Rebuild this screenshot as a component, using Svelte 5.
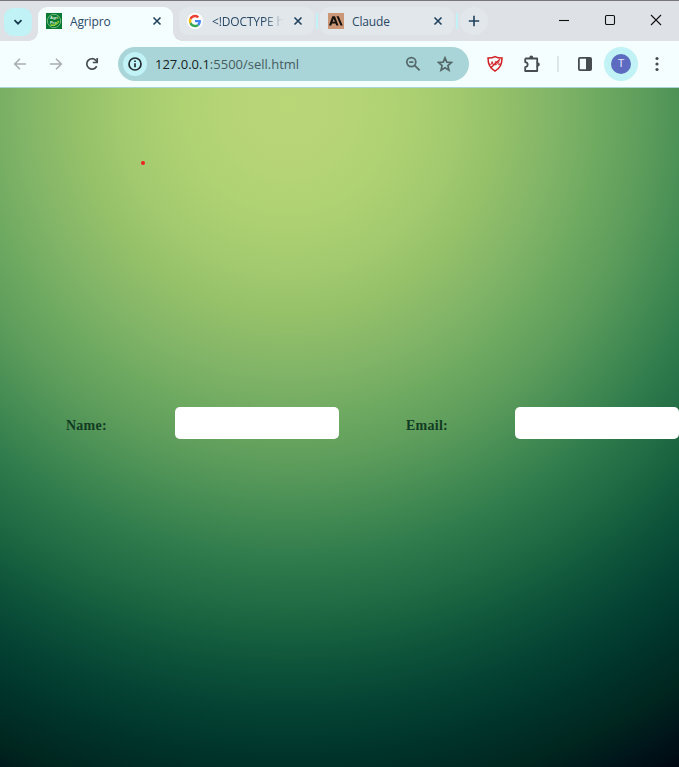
<script>
  const fields = ['Name:', 'Email:'];
</script>

{#snippet close()}
  <svg class="close" width="16" height="16" viewBox="0 0 16 16"><path d="M4.5 4.5l7 7M11.5 4.5l-7 7" /></svg>
{/snippet}

<div class="window">
  <div class="tabs">
    <div class="search"><svg width="12" height="12" viewBox="0 0 12 12"><path d="M2.5 4.2L6 7.7l3.5-3.5" /></svg></div>
    <div class="tab active">
      <svg class="fav" width="16" height="16" viewBox="0 0 16 16">
        <rect width="16" height="16" fill="#087b32" />
        <circle cx="8" cy="8" r="6.7" fill="none" stroke="#79b783" />
        <text x="8" y="5.9" text-anchor="middle" class="mini">Agri</text>
        <text x="7.3" y="10.6" text-anchor="middle" class="mini">Pro</text>
        <path d="M4 12q3-.2 5 0 1-3 4-4-.5 3-4 4M5 12.5h4" stroke="#9bd33a" stroke-width="1" fill="none" />
      </svg>
      <span class="title">Agripro</span>
      {@render close()}
    </div>
    <div class="tab second">
      <svg class="fav" width="16" height="16" viewBox="0 0 16 16">
        <circle cx="8" cy="8" r="8" fill="#fff" />
        <g transform="translate(1.8 1.8) scale(.258)">
          <path fill="#ea4335" d="M24 9.5c3.54 0 6.71 1.22 9.21 3.6l6.85-6.85C35.9 2.38 30.47 0 24 0 14.62 0 6.51 5.38 2.56 13.22l7.98 6.19C12.43 13.72 17.74 9.5 24 9.5z" />
          <path fill="#4285f4" d="M46.98 24.55c0-1.57-.15-3.09-.38-4.55H24v9.02h12.94c-.58 2.96-2.26 5.48-4.78 7.18l7.73 6c4.51-4.18 7.09-10.36 7.09-17.65z" />
          <path fill="#fbbc05" d="M10.53 28.59A14.5 14.5 0 0 1 9.77 24c0-1.6.27-3.14.76-4.59l-7.98-6.19A24 24 0 0 0 0 24c0 3.88.92 7.54 2.56 10.78l7.97-6.19z" />
          <path fill="#34a853" d="M24 48c6.48 0 11.93-2.13 15.89-5.81l-7.73-6c-2.15 1.45-4.92 2.3-8.16 2.3-6.26 0-11.57-4.22-13.47-9.91l-7.98 6.19C6.51 42.62 14.62 48 24 48z" />
        </g>
      </svg>
      <span class="title doc">&lt;!DOCTYPE h</span>
      {@render close()}
    </div>
    <i class="sep"></i>
    <div class="tab third">
      <svg class="fav" width="16" height="16" viewBox="0 0 16 16">
        <rect width="16" height="16" fill="#cc9777" />
        <path fill="#17130f" fill-rule="evenodd" d="M4.3 3.2H7l3.5 9.4H8.3l-.8-2.1H4l-.8 2.1H1zM4.7 8.7h2.1L5.7 5.8zM8.5 3.2h2.2l4 9.4h-2.2z" />
      </svg>
      <span class="title">Claude</span>
      {@render close()}
    </div>
    <i class="sep"></i>
    <div class="plus"><svg width="12" height="12" viewBox="0 0 12 12"><path d="M6 .8v10.4M.8 6h10.4" /></svg></div>
    <div class="controls">
      <svg width="12" height="12" viewBox="0 0 12 12"><path d="M1 6.5h10" /></svg>
      <svg width="12" height="12" viewBox="0 0 12 12"><rect x="1.5" y="1.5" width="9" height="9" rx="1.2" /></svg>
      <svg width="12" height="12" viewBox="0 0 12 12"><path d="M1 1l10 10M11 1L1 11" /></svg>
    </div>
  </div>

  <div class="toolbar">
    <svg class="nav" width="16" height="16" viewBox="0 0 16 16"><path d="M14 8H2.8M8 2.7L2.7 8 8 13.3" /></svg>
    <svg class="nav" width="16" height="16" viewBox="0 0 16 16"><path d="M2 8h11.2M8 2.7L13.3 8 8 13.3" /></svg>
    <svg class="reload" width="16" height="16" viewBox="0 0 16 16"><path d="M12.7 10.1A5.2 5.2 0 1 1 11.8 4.4L13.2 5.8" /><path d="M13.2 2v4.5H8.8" /></svg>
    <div class="address">
      <div class="info"><svg width="16" height="16" viewBox="0 0 16 16"><circle cx="8" cy="8" r="6" /><path d="M8 7.2v4M8 4.5v1.6" /></svg></div>
      <span class="url"><b>127.0.0.1</b>:5500/sell.html</span>
      <svg class="zoom" width="16" height="16" viewBox="0 0 16 16"><circle cx="6.3" cy="6.1" r="4.5" /><path d="M4.2 6.1h4.2" /><path d="M9.6 9.4l5 5" stroke-width="1.9" /></svg>
      <svg class="star" width="16" height="16" viewBox="0 0 16 16"><path d="M8 1.8l1.8 4.3 4.7.4-3.6 3.1 1.1 4.6L8 11.7l-4 2.5 1.1-4.6-3.6-3.1 4.7-.4z" /></svg>
    </div>
    <svg class="shield" width="18" height="18" viewBox="0 0 18 18"><path d="M9 1.600c2.200 1.300 4.400 1.500 7 1.500 0 5.600-1 10-7 13C3 13.100 2 8.700 2 3.100c2.600 0 4.800-.2 7-1.500z" /><path d="M4.500 13L14 4.200" stroke-width="1.400" /><path d="M4.500 10l1.700-3.500L7.500 10M5.300 8.800H7M9.200 10V6.700q2.300-.2 2 1.500-.2 1.800-2 1.800M13.600 6.700q-1.500-.3-1.500 1.500t1.500 1.600V8.400" stroke-width=".9" /></svg>
    <svg class="puzzle" width="18" height="18" viewBox="0 0 18 18"><path d="M2.200 3.500h12v4.300M14.200 11.200V16h-12v-3.900c3.300-.3 3.300-4.700 0-5V3.500" stroke-linejoin="round" /><path d="M14.200 7v5" /><path d="M6.400 3V2.500a1.900 1.900 0 0 1 3.800 0V3zM14.500 7.600h.4a1.900 1.900 0 0 1 0 3.800h-.4z" class="solid" /></svg>
    <i class="rule"></i>
    <svg class="panel" width="16" height="16" viewBox="0 0 16 16"><rect x="1.900" y="1.900" width="12.200" height="12.200" rx="1" /><path d="M9 2h5v12H9z" class="solid" /></svg>
    <div class="profile"><span>T</span></div>
    <svg class="more" width="4" height="16" viewBox="0 0 4 16"><circle cx="2" cy="2.500" r="1.600" /><circle cx="2" cy="8" r="1.600" /><circle cx="2" cy="13.500" r="1.600" /></svg>
  </div>

  <main>
    <span class="dot"></span>
    <form>
      {#each fields as field}
        <label><span>{field}</span><input type="text" aria-label={field} /></label>
      {/each}
    </form>
  </main>
</div>

<style>
  :global(body) { margin: 0; overflow: hidden; }
  * { box-sizing: border-box; }
  svg { display: block; flex: none; fill: none; }
  i { flex: none; }
  .window { width: 679px; height: 767px; display: flex; flex-direction: column; overflow: hidden; font-family: "Open Sans", "Noto Sans", sans-serif; }
  .tabs { height: 41px; display: flex; align-items: flex-start; flex: none; padding: 6px 0 0 4px; border-top: 1px solid #77767b; background: #dee1e6; }
  .search { width: 28px; height: 28px; margin: 1px 6px 0 0; display: grid; place-items: center; border-radius: 9px; background: #c1f2f5; flex: none; }
  .search path { stroke: #173c50; stroke-width: 1.8; }
  .tab { position: relative; display: flex; align-items: center; width: 135px; height: 28px; flex: none; padding: 0 8px; border-radius: 9px; background: #e2e7eb; color: #294966; }
  .active { height: 34px; padding-bottom: 6px; border-radius: 9px 9px 0 0; background: #f5feff; }
  .active::before, .active::after { content: ''; position: absolute; bottom: 0; width: 9px; height: 9px; }
  .active::before { left: -9px; background: radial-gradient(circle at 0 0, transparent 8.5px, #f5feff 9px); }
  .active::after { right: -9px; background: radial-gradient(circle at 100% 0, transparent 8.5px, #f5feff 9px); }
  .second { margin-left: 6px; }
  .third { width: 134px; margin-left: 2px; }
  .title { margin-left: 8px; flex: 1; overflow: hidden; white-space: nowrap; font-size: 12px; line-height: 18px; letter-spacing: -.15px; padding-top: 1px; }
  .doc { margin-left: 9px; mask-image: linear-gradient(90deg, #000 53px, transparent 71px); }
  .mini { font: bold 4px "Liberation Sans", sans-serif; fill: #e4f1df; }
  .close path { stroke: #20415d; stroke-width: 1.6; }
  .sep { width: 2px; height: 16px; margin: 6px 0 0 2px; background: #c1f2f5; }
  .plus { width: 28px; height: 28px; margin-left: 2px; border-radius: 50%; background: #e2e7eb; display: grid; place-items: center; flex: none; }
  .plus path { stroke: #20415d; stroke-width: 1.6; }
  .controls { margin: 7px 17px 0 auto; display: flex; gap: 34px; }
  .controls svg { stroke: #111; stroke-width: 1.1; }
  .toolbar { height: 47px; flex: none; display: flex; align-items: center; padding-left: 12px; border-bottom: 1px solid #a9d5d8; background: #f5feff; }
  .nav { margin-right: 20px; stroke: #a9aeb1; stroke-width: 1.6; }
  .reload { stroke: #474c50; stroke-width: 1.7; margin-right: 18px; }
  .address { width: 351px; height: 34px; display: flex; align-items: center; padding: 0 16px 0 5px; border-radius: 17px; background: #a9d5d8; flex: none; }
  .info { width: 24px; height: 24px; display: grid; place-items: center; border-radius: 50%; background: #c1f2f5; }
  .info svg { stroke: #242c30; stroke-width: 1.7; }
  .url { margin-left: 8px; width: 250px; white-space: nowrap; font-size: 13px; line-height: 20px; color: #465c60; }
  .url b { color: #182326; font-weight: 400; }
  .zoom { stroke: #55696b; stroke-width: 1.7; margin-right: 16px; }
  .star { stroke: #55696b; stroke-width: 1.7; }
  .shield { margin-left: 17px; stroke: #d21e24; stroke-width: 1.5; }
  .puzzle { margin-left: 19px; stroke: #474c50; stroke-width: 1.8; }
  .puzzle .solid, .panel .solid { fill: #474c50; stroke: none; }
  .rule { width: 2px; height: 16px; margin: 0 18px 0 16px; background: #dce6eb; }
  .panel { stroke: #474c50; stroke-width: 1.8; }
  .profile { width: 34px; height: 34px; margin-left: 11px; display: grid; place-items: center; border-radius: 50%; background: #c1f2f5; flex: none; }
  .profile span { width: 20px; height: 20px; border-radius: 50%; background: #5c6bc0; color: #e1e4ff; text-align: center; font: 11px/20px Roboto, sans-serif; }
  .more { margin-left: 17px; }
  .more circle { fill: #474c50; }
  main { position: relative; flex: 1; padding-top: 319px; background: radial-gradient(circle at 288px 18px, #b9d777 0, #b7d576 50px, #afd273 105px, #a3ca6f 165px, #95c169 210px, #84b668 260px, #6faa61 310px, #5c9c5b 360px, #468d54 405px, #2f7b4c 455px, #1d6842 510px, #0d533a 560px, #034032 612px, #00342b 650px, #00251f 700px, #00151a 735px, #000510 775px); }
  .dot { position: absolute; left: 141px; top: 73px; width: 4px; height: 4px; border-radius: 50%; background: #ee2121; }
  form { display: flex; }
  label { width: 340px; display: flex; align-items: center; flex: none; padding-left: 66px; }
  label span { width: 109px; padding-top: 5px; color: #123b23; font: bold 14px/20px "Liberation Serif", serif; letter-spacing: .25px; }
  input { width: 164px; height: 32px; padding: 6px; border: 0; border-radius: 5px; background: #fff; flex: none; }
</style>
